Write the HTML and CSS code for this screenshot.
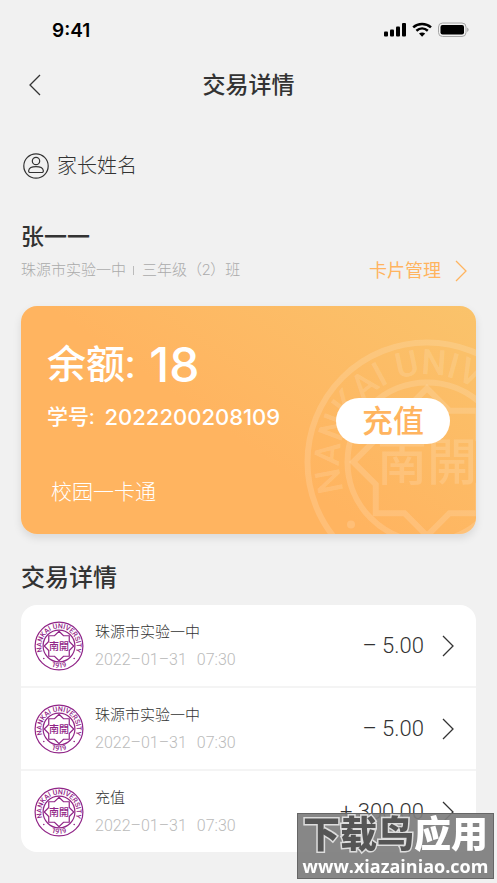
FILE: index.html
```html
<!DOCTYPE html>
<html lang="zh-CN">
<head>
    <meta charset="UTF-8">
    <meta name="viewport" content="width=device-width, initial-scale=1.0">
    <title>交易详情</title>
    <link rel="stylesheet" href="styles.css">
</head>
<body>

<!-- Symboles partagés -->
<svg class="sprite" width="0" height="0" aria-hidden="true">
    <defs>
        <path id="arcTop" d="M-30.3,17.5 A35,35 0 1 1 30.3,17.5" />
        <path id="arcBottom" d="M-40,18 A44,44 0 0 0 40,18" />
        <symbol id="seal" viewBox="-50 -50 100 100">
            <g fill="none" stroke="currentColor" stroke-width="2.4">
                <circle r="47.8" />
                <circle r="31.8" />
                <path d="M0,-29.5 L9,-20.5 H20.5 V-9 L29.5,0 L20.5,9 V20.5 H9 L0,29.5 L-9,20.5 H-20.5 V9 L-29.5,0 L-20.5,-9 V-20.5 H-9 Z" />
            </g>
            <g fill="currentColor" text-anchor="middle">
                <text class="seal-name"><textPath href="#arcTop" startOffset="50%">NANKAI UNIVERSITY</textPath></text>
                <text class="seal-year"><textPath href="#arcBottom" startOffset="50%">1919</textPath></text>
                <text class="seal-core" y="7">南開</text>
                <circle cx="-30.4" cy="25" r="1.6" />
                <circle cx="30.4" cy="25" r="1.6" />
            </g>
        </symbol>
        <symbol id="next" viewBox="0 0 12 22">
            <path d="M1,1 L11,11 L1,21" fill="none" stroke="currentColor" stroke-width="1.3" />
        </symbol>
    </defs>
</svg>

<div class="status">
    <span class="time">9:41</span>
    <svg width="85" height="16" viewBox="0 0 85 16" aria-hidden="true">
        <rect x="0" y="9.5" width="4" height="5" rx="1" />
        <rect x="6" y="7.5" width="4" height="7" rx="1" />
        <rect x="12" y="4.5" width="4" height="10" rx="1" />
        <rect x="18" y="1" width="4" height="13.5" rx="1" />
        <g fill="none" stroke="#000" stroke-width="2.5">
            <path d="M29.2,5.4 C34.2,0.9 42,0.9 47,5.4" />
            <path d="M32.4,8.8 C35.8,5.8 40.4,5.8 43.8,8.8" />
        </g>
        <path d="M35,11.6 C36.8,10 39.4,10 41.2,11.6 L38.1,14.7 Z" />
        <rect x="54.5" y="1" width="27.5" height="13.5" rx="4" fill="none" stroke="#a6a6a6" />
        <rect x="56.5" y="3" width="23.5" height="9.5" rx="2" />
        <path d="M83.2,5.5 Q86,7.7 83.2,10 Z" fill="#a6a6a6" />
    </svg>
</div>

<header>
    <button class="back" type="button" aria-label="返回">
        <svg width="12" height="22" viewBox="0 0 12 22">
            <path d="M11,1 L1,11 L11,21" fill="none" stroke="currentColor" stroke-width="1.3" />
        </svg>
    </button>
    <h1>交易详情</h1>
</header>

<main>
    <div class="parent">
        <svg width="26" height="26" viewBox="0 0 26 26" fill="none" stroke="#333" stroke-width="1.2" aria-hidden="true">
            <circle cx="13" cy="13" r="12.2" />
            <circle cx="13" cy="8" r="3.7" />
            <path d="M5.7,17.5 C6.6,12.4 19.4,12.4 20.3,17.5 C20.5,19 19.8,19.5 18.6,19.5 H7.4 C6.2,19.5 5.5,19 5.7,17.5 Z" />
        </svg>
        <span>家长姓名</span>
    </div>

    <div class="student">
        <div>
            <h2>张一一</h2>
            <p class="school"><span>珠源市实验一中</span><i></i><span>三年级（2）班</span></p>
        </div>
        <a class="manage" href="#">卡片管理
            <svg width="12" height="22"><use href="#next" /></svg>
        </a>
    </div>

    <section class="card">
        <svg class="card-seal" aria-hidden="true"><use href="#seal" /></svg>
        <p class="balance">余额: <b>18</b></p>
        <div class="card-row">
            <p class="number">学号: <b>2022200208109</b></p>
            <button class="recharge" type="button">充值</button>
        </div>
        <p class="card-name">校园一卡通</p>
    </section>

    <h2 class="list-title">交易详情</h2>
    <ul class="list">
        <li>
            <a href="#">
                <svg class="logo" aria-hidden="true"><use href="#seal" /></svg>
                <span class="info">
                    <span>珠源市实验一中</span>
                    <time><span>2022–01–31</span><span>07:30</span></time>
                </span>
                <span class="amount">– 5.00</span>
                <svg width="12" height="22"><use href="#next" /></svg>
            </a>
        </li>
        <li>
            <a href="#">
                <svg class="logo" aria-hidden="true"><use href="#seal" /></svg>
                <span class="info">
                    <span>珠源市实验一中</span>
                    <time><span>2022–01–31</span><span>07:30</span></time>
                </span>
                <span class="amount">– 5.00</span>
                <svg width="12" height="22"><use href="#next" /></svg>
            </a>
        </li>
        <li>
            <a href="#">
                <svg class="logo" aria-hidden="true"><use href="#seal" /></svg>
                <span class="info">
                    <span>充值</span>
                    <time><span>2022–01–31</span><span>07:30</span></time>
                </span>
                <span class="amount">+ 300.00</span>
                <svg width="12" height="22"><use href="#next" /></svg>
            </a>
        </li>
    </ul>
</main>

<div class="badge">
    <strong><span>下载鸟</span>应用</strong>
    <em>www.xiazainiao.com</em>
</div>

</body>
</html>
```
FILE: styles.css
```css
* {
    box-sizing: border-box;
}

body {
    font-family: Roboto, "Noto Sans CJK SC", sans-serif;
    margin: 0;
    padding: 0 21px 31px;
    background-color: #f1f1f1;
    color: #333;
}

h1, h2, p, ul {
    margin: 0;
    padding: 0;
}

a {
    color: inherit;
    text-decoration: none;
}

button {
    font-family: inherit;
    border: none;
    cursor: pointer;
}

.sprite {
    display: block;
}

.status {
    display: flex;
    justify-content: space-between;
    align-items: center;
    height: 60px;
    padding: 0 7px 0 31px;
    color: #000;
}

.time {
    font-family: Inter, sans-serif;
    font-size: 19px;
    font-weight: 600;
}

header {
    display: grid;
    grid-template-columns: 30px 1fr 30px;
    align-items: center;
    height: 50px;
}

.back {
    display: flex;
    padding: 8px;
    background: none;
    color: #333;
}

h1, h2 {
    font-size: 23px;
    line-height: 32px;
    font-weight: 500;
}

h1 {
    padding-top: 2px;
    text-align: center;
}

.parent {
    display: flex;
    align-items: center;
    gap: 8px;
    padding: 40px 2px 0;
    font-size: 20px;
    line-height: 32px;
    font-weight: 300;
}

.student {
    display: flex;
    justify-content: space-between;
    align-items: flex-end;
    margin-top: 40px;
}

.school {
    display: flex;
    align-items: center;
    margin-top: 4px;
    font-size: 15px;
    line-height: 24px;
    font-weight: 300;
    color: #aaa;
}

.school i {
    width: 1px;
    height: 9px;
    margin: 0 8px 0 7px;
    background-color: #bbb;
}

.manage {
    display: flex;
    align-items: center;
    gap: 14px;
    padding-right: 9px;
    font-size: 18px;
    line-height: 22px;
    color: #ffb45f;
}

.card {
    position: relative;
    overflow: hidden;
    margin-top: 24px;
    padding: 30px 26px 26px;
    border-radius: 16px;
    background: linear-gradient(35deg, #ffb460 45%, #fac36b);
    box-shadow: 0 4px 8px rgba(0, 0, 0, 0.1);
    color: #fff;
}

.card-seal {
    position: absolute;
    top: 31px;
    right: -76px;
    width: 250px;
    height: 250px;
    color: rgba(255, 255, 255, 0.15);
}

.card p, .card-row {
    position: relative;
}

.balance {
    display: flex;
    align-items: center;
    gap: 14px;
    font-size: 39px;
    line-height: 58px;
    font-weight: 500;
}

.card b {
    font-family: Inter, sans-serif;
    font-weight: 500;
}

.balance b {
    font-size: 48px;
}

.card-row {
    display: flex;
    justify-content: space-between;
    align-items: flex-start;
    margin-top: 4px;
}

.number {
    display: flex;
    align-items: center;
    gap: 10px;
    font-size: 21px;
    line-height: 38px;
    font-weight: 500;
}

.number b {
    font-size: 22px;
}

.recharge {
    width: 114px;
    height: 46px;
    padding: 2px 0 0;
    border-radius: 23px;
    background-color: #fff;
    color: #ffb45f;
    font-size: 31px;
    line-height: 44px;
    font-weight: 500;
}

.card-name {
    margin-top: 32px;
    padding-left: 4px;
    font-size: 21px;
    line-height: 32px;
    font-weight: 300;
}

.list-title {
    margin: 28px 0 11px;
    font-size: 24px;
}

.list {
    list-style: none;
    border-radius: 16px;
    background-color: #fff;
}

.list li + li {
    border-top: 2px solid #f4f4f4;
}

.list a {
    display: flex;
    align-items: center;
    height: 81px;
    padding: 0 22px 0 13px;
}

.logo {
    width: 50px;
    height: 50px;
    color: #902487;
}

.info {
    display: flex;
    flex-direction: column;
    flex: 1;
    gap: 4px;
    margin-left: 11px;
    font-size: 15px;
    line-height: 24px;
    font-weight: 300;
}

.info time {
    display: flex;
    gap: 10px;
    font-size: 16px;
    color: #bbb;
}

.amount {
    margin-right: 18px;
    font-size: 22px;
    font-weight: 300;
}

.seal-name, .seal-year {
    font: 500 14px Roboto, sans-serif;
}

.seal-core {
    font: 500 20px "Noto Sans CJK SC", sans-serif;
}

.badge {
    position: fixed;
    right: 3px;
    bottom: 4px;
    width: 197px;
    height: 66px;
    border: 1px solid #666;
    background-color: rgba(125, 125, 125, 0.92);
    color: #fff;
    text-align: center;
}

.badge strong, .badge em {
    display: block;
    font-style: normal;
    white-space: nowrap;
}

.badge strong {
    padding-top: 2px;
    font-size: 37px;
    line-height: 40px;
    font-weight: 900;
}

.badge strong span {
    color: #555;
    -webkit-text-stroke: 3px #ddd;
    paint-order: stroke fill;
}

.badge em {
    font-family: "Open Sans", sans-serif;
    font-size: 18px;
    line-height: 20px;
    font-weight: 700;
}
```
